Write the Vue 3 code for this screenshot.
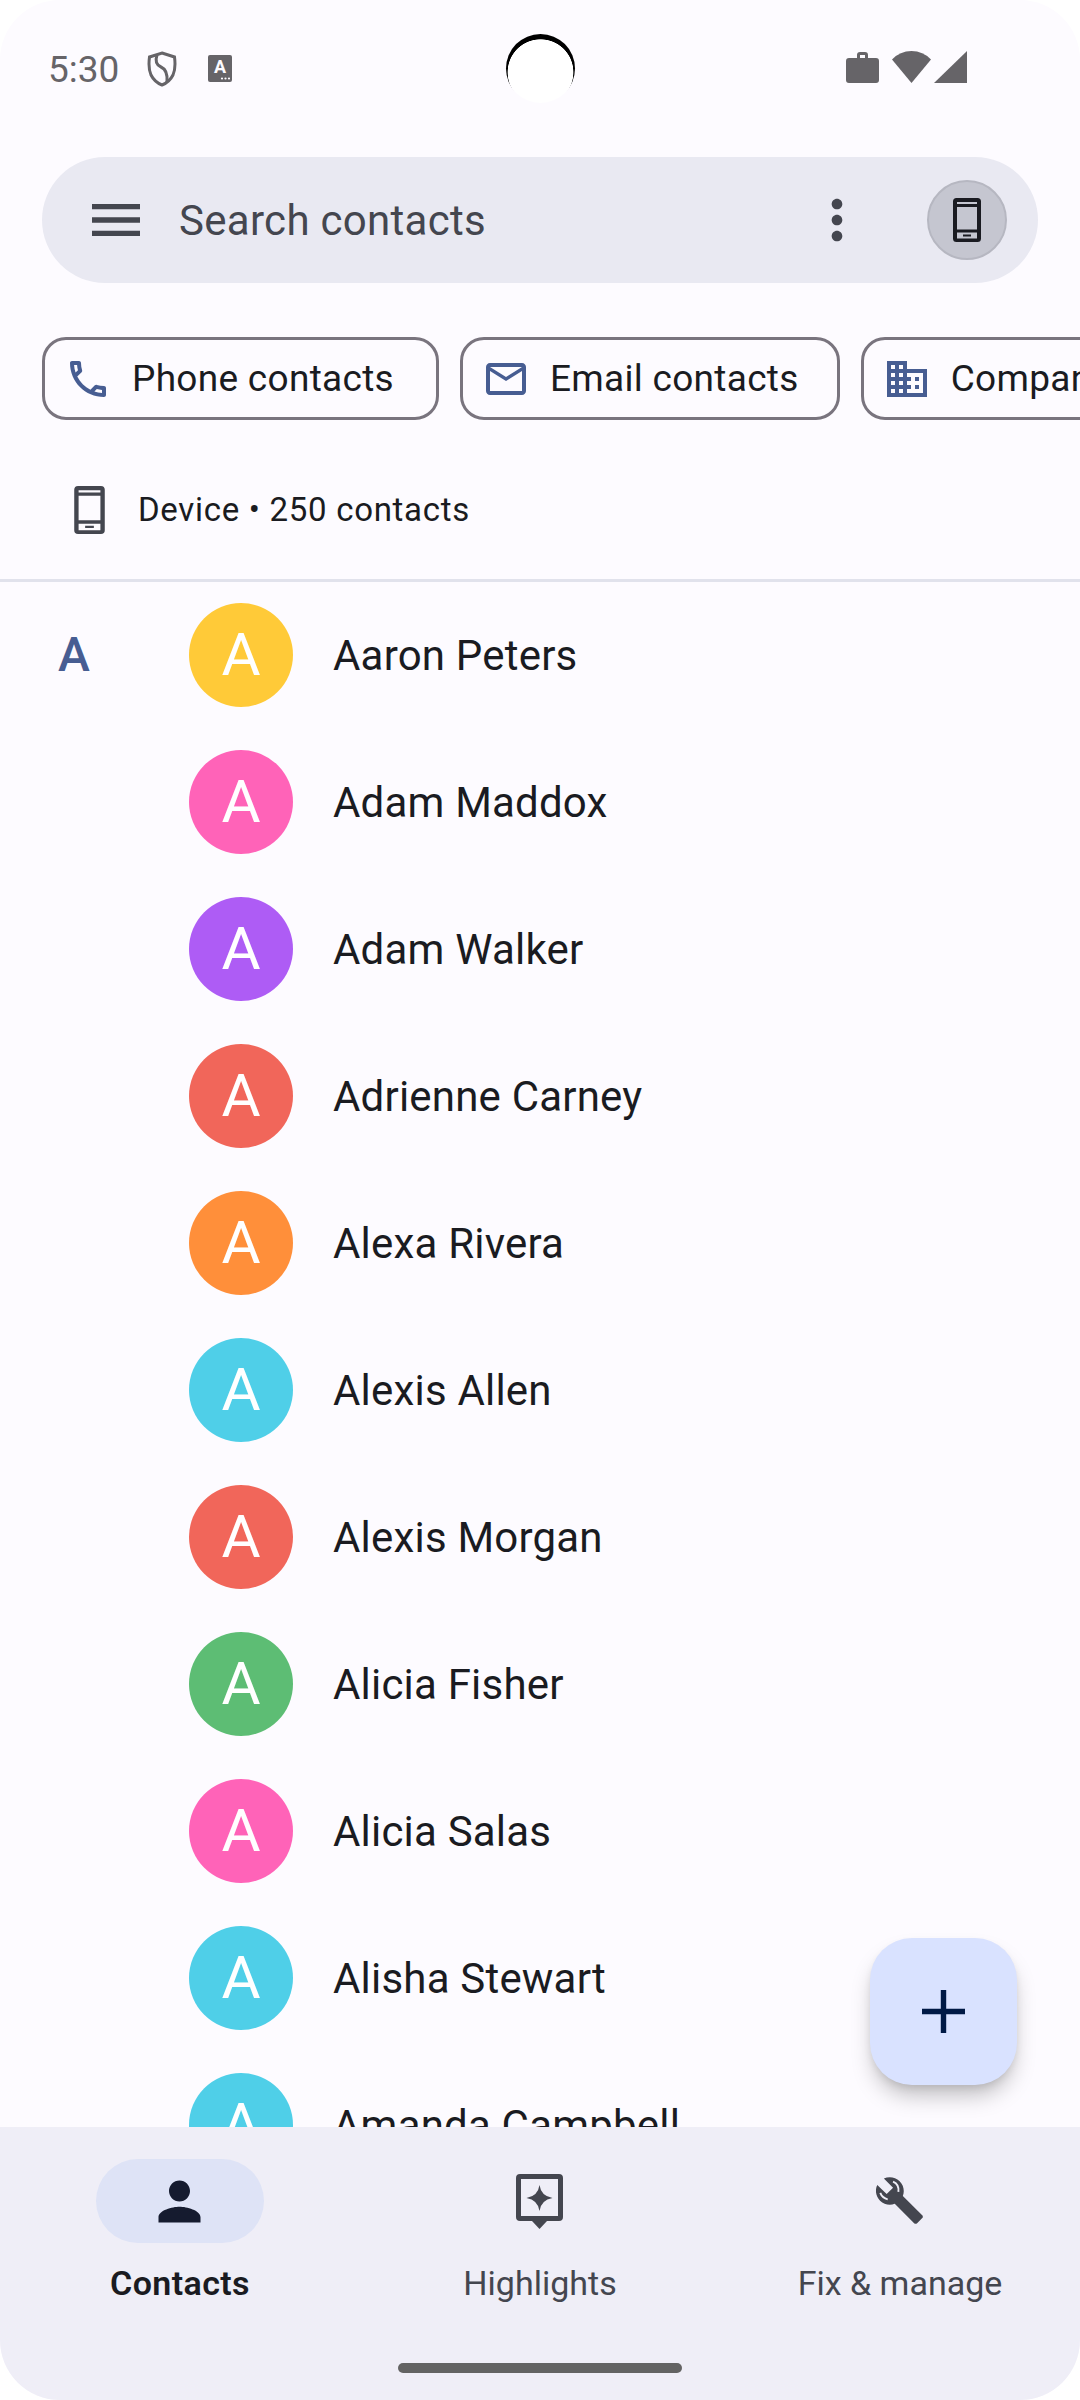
<script setup>
const contacts = [
  { name: 'Aaron Peters', color: '#ffca38' },
  { name: 'Adam Maddox', color: '#ff63b8' },
  { name: 'Adam Walker', color: '#ae5cf5' },
  { name: 'Adrienne Carney', color: '#f1665a' },
  { name: 'Alexa Rivera', color: '#ff8f3a' },
  { name: 'Alexis Allen', color: '#4fcfe8' },
  { name: 'Alexis Morgan', color: '#f1665a' },
  { name: 'Alicia Fisher', color: '#5dbd74' },
  { name: 'Alicia Salas', color: '#ff63b8' },
  { name: 'Alisha Stewart', color: '#4fcfe8' },
  { name: 'Amanda Campbell', color: '#4fcfe8' },
]

const mobilePath = 'M3.5 0h21A3.5 3.5 0 0 1 28 3.5v37a3.5 3.5 0 0 1-3.5 3.5h-21A3.5 3.5 0 0 1 0 40.500v-37A3.500 3.500 0 0 1 3.500 0zM4 4v2h20V4zM4 9v22.500h20V9zM4 34.500v6h20v-6zM10 36.500h8v2h-8z'
</script>

<template>
  <div class="screen">
    <div class="status">
      <span class="time">5:30</span>
      <svg class="shield" viewBox="0 0 30 36" fill="none" stroke="#666468" stroke-width="3">
        <path d="M15 2 L27.500 6 Q29 17 26 24 Q22.500 31 15 34 Q7.500 31 4 24 Q1 17 2.500 6 Z" />
        <path d="M10 4 Q7 13 14 16 Q21 19 20 31" />
      </svg>
      <svg class="keyboard" viewBox="0 0 24 27">
        <rect width="24" height="27" rx="2" fill="#666468" />
        <text x="12" y="18" text-anchor="middle" class="kb-letter">A</text>
        <circle cx="14" cy="23.500" r="1.100" fill="#fdfbff" />
        <circle cx="17.500" cy="23.500" r="1.100" fill="#fdfbff" />
        <circle cx="21" cy="23.500" r="1.100" fill="#fdfbff" />
      </svg>
      <div class="status-right">
        <svg class="briefcase" viewBox="0 0 33 32">
          <path fill="#666468" fill-rule="evenodd" d="M11 7V4a3 3 0 0 1 3-3h5a3 3 0 0 1 3 3v3h8a3 3 0 0 1 3 3v19a3 3 0 0 1-3 3H3a3 3 0 0 1-3-3V10a3 3 0 0 1 3-3zM14 4v3h5V4z" />
        </svg>
        <svg class="wifi" viewBox="0 0 39 32">
          <path fill="#666468" d="M19.500 32 L0 8.500 Q8 0 19.500 0 Q31 0 39 8.500 Z" />
        </svg>
        <svg class="signal" viewBox="0 0 33 32">
          <path fill="#666468" d="M33 0V32H0Z" />
        </svg>
      </div>
      <div class="camera"></div>
    </div>

    <div class="search">
      <svg class="menu-icon" viewBox="0 0 24 24">
        <path fill="#44464f" d="M3 18h18v-2H3v2zm0-5h18v-2H3v2zm0-7v2h18V6H3z" />
      </svg>
      <span class="search-text">Search contacts</span>
      <svg class="more-icon" viewBox="0 0 24 24">
        <path fill="#44464f" d="M12 8c1.100 0 2-.9 2-2s-.9-2-2-2-2 .9-2 2 .9 2 2 2zm0 2c-1.100 0-2 .9-2 2s.9 2 2 2 2-.9 2-2-.9-2-2-2zm0 6c-1.100 0-2 .9-2 2s.9 2 2 2 2-.9 2-2-.9-2-2-2z" />
      </svg>
      <div class="account">
        <svg class="account-phone" viewBox="0 0 28 44">
          <path fill="#1a1b21" fill-rule="evenodd" :d="mobilePath" />
        </svg>
      </div>
    </div>

    <div class="chips">
      <div class="chip">
        <svg class="chip-icon" viewBox="0 0 24 24">
          <path fill="#475d92" d="M6.540 5c.06.89.21 1.760.45 2.590l-1.200 1.200c-.41-1.200-.67-2.470-.76-3.790h1.510m9.860 12.020c.85.24 1.720.39 2.600.45v1.490c-1.320-.09-2.590-.35-3.800-.75l1.200-1.190M7.500 3H4c-.55 0-1 .45-1 1 0 9.390 7.610 17 17 17 .55 0 1-.45 1-1v-3.490c0-.55-.45-1-1-1-1.240 0-2.450-.2-3.570-.57-.1-.04-.21-.05-.31-.05-.26 0-.51.1-.71.29l-2.200 2.200c-2.830-1.450-5.150-3.760-6.590-6.590l2.200-2.200c.28-.28.36-.67.25-1.020C8.700 6.450 8.500 5.250 8.500 4c0-.55-.45-1-1-1z" />
        </svg>
        Phone contacts
      </div>
      <div class="chip chip-email">
        <svg class="chip-icon" viewBox="0 0 24 24">
          <path fill="#475d92" d="M20 4H4c-1.100 0-1.990.9-1.990 2L2 18c0 1.100.9 2 2 2h16c1.100 0 2-.9 2-2V6c0-1.100-.9-2-2-2zm0 14H4V8l8 5 8-5v10zm-8-7L4 6h16l-8 5z" />
        </svg>
        Email contacts
      </div>
      <div class="chip">
        <svg class="chip-icon" viewBox="0 0 24 24">
          <path fill="#475d92" d="M12 7V3H2v18h20V7H12zM6 19H4v-2h2v2zm0-4H4v-2h2v2zm0-4H4V9h2v2zm0-4H4V5h2v2zm4 12H8v-2h2v2zm0-4H8v-2h2v2zm0-4H8V9h2v2zm0-4H8V5h2v2zm10 12h-8v-2h2v-2h-2v-2h2v-2h-2V9h8v10zm-2-8h-2v2h2v-2zm0 4h-2v2h2v-2z" />
        </svg>
        Company contacts
      </div>
    </div>

    <div class="device">
      <svg class="device-icon" viewBox="0 0 28 44">
        <path fill="#44464f" fill-rule="evenodd" :d="mobilePath" />
      </svg>
      <span>Device • 250 contacts</span>
    </div>

    <div class="list">
      <div v-for="(c, i) in contacts" :key="c.name" class="row">
        <span class="section">{{ i === 0 ? 'A' : '' }}</span>
        <span class="avatar" :style="{ background: c.color }">A</span>
        <span class="name">{{ c.name }}</span>
      </div>
    </div>

    <div class="nav">
      <div class="tab active">
        <div class="pill">
          <svg class="person" viewBox="0 0 24 24">
            <path fill="#151b2f" d="M12 12c2.210 0 4-1.790 4-4s-1.790-4-4-4-4 1.790-4 4 1.790 4 4 4zm0 2c-2.670 0-8 1.340-8 4v2h16v-2c0-2.660-5.330-4-8-4z" />
          </svg>
        </div>
        <span>Contacts</span>
      </div>
      <div class="tab">
        <div class="pill">
          <svg class="highlight" viewBox="0 0 47 55">
            <path fill="#44464f" fill-rule="evenodd" d="M4 0h39a4 4 0 0 1 4 4v39a4 4 0 0 1-4 4H31l-7.500 8-7.500-8H4a4 4 0 0 1-4-4V4a4 4 0 0 1 4-4zM5 5v37h37V5z" />
            <path fill="#44464f" d="M23.500 11 Q25 22 36.500 24 Q25 26 23.500 37 Q22 26 10.500 24 Q22 22 23.500 11Z" />
          </svg>
        </div>
        <span>Highlights</span>
      </div>
      <div class="tab">
        <div class="pill">
          <svg class="wrench" viewBox="1 1 23 23">
            <path fill="#44464f" d="M22.700 19l-9.100-9.100c.9-2.300.4-5-1.500-6.900-2-2-5-2.400-7.400-1.300L9 6 6 9 1.600 4.700C.4 7.100.9 10.100 2.900 12.100c1.900 1.900 4.600 2.400 6.900 1.500l9.100 9.100c.4.4 1 .4 1.400 0l2.300-2.300c.5-.4.500-1.100.1-1.400z" />
            <path fill="none" stroke="#efeef7" stroke-width="0.9" d="M3 8.500 Q4 11 6.500 11.500 M9 3.200 Q12 4.500 11.500 8" />
          </svg>
        </div>
        <span>Fix &amp; manage</span>
      </div>
      <div class="home-bar"></div>
    </div>

    <div class="fab">
      <svg class="plus" viewBox="0 0 43 43">
        <path fill="#001945" d="M18.800 0h5.400v18.800H43v5.400H24.200V43h-5.400V24.200H0v-5.400h18.800z" />
      </svg>
    </div>
  </div>
</template>

<style>
html, body { background: #fff; }
</style>

<style scoped>
.screen {
  position: relative;
  width: 1080px;
  height: 2400px;
  display: flex;
  flex-direction: column;
  overflow: hidden;
  background: #fdfbff;
  border-radius: 60px;
  font-family: Roboto, "Noto Sans", sans-serif;
  color: #1a1b21;
}

.status {
  position: relative;
  flex: none;
  height: 157px;
  display: flex;
  align-items: flex-start;
  padding: 50px 113px 0 48px;
  box-sizing: border-box;
}
.time {
  font-size: 37px;
  line-height: 40px;
  color: #666468;
  width: 99px;
  flex: none;
}
.shield { width: 30px; height: 36px; margin-top: 1px; flex: none; }
.keyboard { width: 24px; height: 27px; margin: 5px 0 0 31px; flex: none; }
.kb-letter { font: 700 18px Roboto, sans-serif; fill: #fdfbff; }
.status-right {
  margin-left: auto;
  display: flex;
  gap: 13px;
  align-items: flex-start;
  padding-top: 1px;
}
.briefcase { width: 33px; height: 32px; }
.wifi { width: 39px; height: 32px; }
.signal { width: 33px; height: 32px; margin-left: -10px; }
.camera {
  position: absolute;
  left: 505.500px;
  top: 34px;
  width: 69px;
  height: 69px;
  border-radius: 50%;
  background: radial-gradient(circle 33.200px at 34.500px 38.200px, #fff 98%, #000 100%);
}

.search {
  flex: none;
  height: 126px;
  margin: 0 42px;
  display: flex;
  align-items: center;
  background: #e9e9f2;
  border-radius: 63px;
  padding: 0 31px 0 42px;
}
.menu-icon { width: 64px; height: 64px; flex: none; }
.search-text {
  font-size: 42px;
  letter-spacing: 0.3px;
  color: #44464f;
  margin-left: 31px;
}
.more-icon { width: 64px; height: 64px; flex: none; margin-left: auto; margin-right: 58px; }
.account {
  width: 80px;
  height: 80px;
  box-sizing: border-box;
  flex: none;
  border-radius: 50%;
  background: #c5c6d0;
  border: 2px solid #b6b7c1;
  display: flex;
  align-items: center;
  justify-content: center;
}
.account-phone { width: 28px; height: 44px; }

.chips {
  flex: none;
  height: 83px;
  margin: 54px 0 0 42px;
  display: flex;
  gap: 21px;
  overflow: hidden;
}
.chip {
  flex: none;
  display: flex;
  align-items: center;
  gap: 20px;
  padding: 0 42px 0 19px;
  border: 3px solid #79747e;
  border-radius: 24px;
  box-sizing: border-box;
  font-size: 37px;
  letter-spacing: 0.3px;
  white-space: nowrap;
}
.chip-email { padding-right: 38px; }
.chip-icon { width: 48px; height: 48px; flex: none; }

.device {
  flex: none;
  height: 162px;
  display: flex;
  align-items: center;
  padding: 20px 0 0 74px;
  border-bottom: 3px solid #e1e2ec;
  box-sizing: border-box;
  font-size: 33px;
  letter-spacing: 0.7px;
}
.device-icon { width: 31px; height: 48px; margin-right: 33px; flex: none; }

.list {
  flex: 1;
  min-height: 0;
  margin-top: -1px;
  overflow: hidden;
}
.row {
  height: 147px;
  display: flex;
  align-items: center;
  padding-left: 58px;
}
.section {
  width: 131px;
  flex: none;
  font-size: 48px;
  font-weight: 500;
  color: #475d92;
}
.avatar {
  width: 104px;
  height: 104px;
  flex: none;
  border-radius: 50%;
  display: flex;
  align-items: center;
  justify-content: center;
  color: #fff;
  font-size: 60px;
  font-weight: 400;
}
.name {
  margin-left: 40px;
  padding-top: 2px;
  font-size: 42px;
  letter-spacing: 0.2px;
}

.nav {
  position: relative;
  flex: none;
  height: 273px;
  display: flex;
  background: #efeef7;
}
.tab {
  width: 360px;
  display: flex;
  flex-direction: column;
  align-items: center;
  padding-top: 32px;
  font-size: 34px;
  color: #44464f;
}
.tab.active { color: #1a1b21; font-weight: 600; letter-spacing: 0.4px; }
.pill {
  width: 168px;
  height: 84px;
  border-radius: 42px;
  display: flex;
  align-items: center;
  justify-content: center;
  margin-bottom: 20px;
}
.active .pill { background: #dee3f6; }
.person { width: 63px; height: 63px; margin-right: 2px; }
.highlight { width: 47px; height: 55px; margin-right: 1px; }
.wrench { width: 49px; height: 49px; }
.home-bar {
  position: absolute;
  left: 398px;
  bottom: 27px;
  width: 284px;
  height: 10px;
  border-radius: 5px;
  background: #636363;
}

.fab {
  position: absolute;
  left: 870px;
  top: 1938px;
  width: 147px;
  height: 147px;
  border-radius: 42px;
  background: #d9e2ff;
  box-shadow: 0 14px 22px -4px rgba(0, 0, 0, 0.25), 0 4px 8px -2px rgba(0, 0, 0, 0.1);
  display: flex;
  align-items: center;
  justify-content: center;
}
.plus { width: 43px; height: 43px; }
</style>
